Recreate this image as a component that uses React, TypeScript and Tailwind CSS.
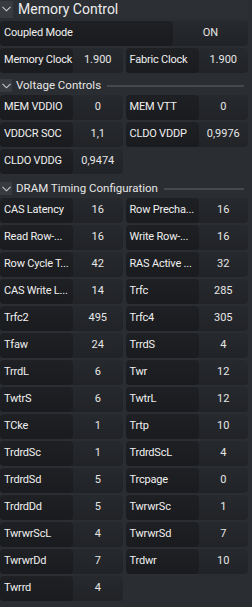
import React from 'react';

type Item = { label: string; value: string };

const voltage: Item[] = [
  { label: 'MEM VDDIO', value: '0' },
  { label: 'MEM VTT', value: '0' },
  { label: 'VDDCR SOC', value: '1,1' },
  { label: 'CLDO VDDP', value: '0,9976' },
  { label: 'CLDO VDDG', value: '0,9474' },
];

const timings: Item[] = [
  { label: 'CAS Latency', value: '16' },
  { label: 'Row Precha...', value: '16' },
  { label: 'Read Row-...', value: '16' },
  { label: 'Write Row-...', value: '16' },
  { label: 'Row Cycle T...', value: '42' },
  { label: 'RAS Active ...', value: '32' },
  { label: 'CAS Write L...', value: '14' },
  { label: 'Trfc', value: '285' },
  { label: 'Trfc2', value: '495' },
  { label: 'Trfc4', value: '305' },
  { label: 'Tfaw', value: '24' },
  { label: 'TrrdS', value: '4' },
  { label: 'TrrdL', value: '6' },
  { label: 'Twr', value: '12' },
  { label: 'TwtrS', value: '6' },
  { label: 'TwtrL', value: '12' },
  { label: 'TCke', value: '1' },
  { label: 'Trtp', value: '10' },
  { label: 'TrdrdSc', value: '1' },
  { label: 'TrdrdScL', value: '4' },
  { label: 'TrdrdSd', value: '5' },
  { label: 'Trcpage', value: '0' },
  { label: 'TrdrdDd', value: '5' },
  { label: 'TwrwrSc', value: '1' },
  { label: 'TwrwrScL', value: '4' },
  { label: 'TwrwrSd', value: '7' },
  { label: 'TwrwrDd', value: '7' },
  { label: 'Trdwr', value: '10' },
  { label: 'Twrrd', value: '4' },
];

function Chevron({ big = false }: { big?: boolean }) {
  return (
    <div className={`flex items-center justify-center bg-[#383b40] ${big ? 'w-[13px] h-[17px]' : 'w-[12px] h-[13px]'}`}>
      <svg width="9" height="6" viewBox="0 0 9 6" fill="none">
        <path d="M0.5 0.8 L4.5 4.8 L8.5 0.8" stroke="#c8cacd" strokeWidth="1.1" />
      </svg>
    </div>
  );
}

function SectionHeader({ title }: { title: string }) {
  return (
    <div className="flex items-center h-[13px]">
      <Chevron />
      <span className="ml-[4px] text-[11.5px] leading-none text-[#e6e6e6]">{title}</span>
      <div className="ml-[6px] mr-[4px] flex-1 h-[2px] bg-[#45484d]" />
    </div>
  );
}

function Cell({ label, value, labelW = 'w-[73px]' }: Item & { labelW?: string }) {
  return (
    <div className="flex h-[25px] rounded-[4px] bg-gradient-to-b from-[#26292d] to-[#212327]">
      <div className={`${labelW} shrink-0 flex items-center pl-[4px] rounded-[4px] bg-gradient-to-b from-[#1e2023] to-[#191b1e] text-[#f0f0f0] tracking-[-0.2px] whitespace-nowrap`}>
        {label}
      </div>
      <div className="flex-1 flex items-center justify-center text-[#e6e6e6]">{value}</div>
    </div>
  );
}

export default function App() {
  return (
    <div className="w-[252px] h-[607px] overflow-hidden bg-[#2a2d31] font-['Roboto',sans-serif] text-[11px]">
      <div className="pr-[4px]">
        {/* Memory Control */}
        <div className="flex items-center h-[18px] bg-[#2c2f34]">
          <Chevron big />
          <span className="ml-[5px] text-[14px] leading-none text-[#ededed]">Memory Control</span>
        </div>
        <div className="mt-[3px] flex flex-col gap-[2px]">
          <Cell label="Coupled Mode" value="ON" labelW="w-[173px]" />
          <div className="grid grid-cols-2 gap-x-[3px]">
            <Cell label="Memory Clock" value="1.900" />
            <Cell label="Fabric Clock" value="1.900" />
          </div>
        </div>

        {/* Voltage Controls */}
        <div className="mt-[6px]">
          <SectionHeader title="Voltage Controls" />
        </div>
        <div className="mt-[3px] grid grid-cols-2 gap-x-[3px] gap-y-[2px]">
          {voltage.map((v) => (
            <Cell key={v.label} {...v} />
          ))}
        </div>

        {/* DRAM Timing */}
        <div className="mt-[8px]">
          <SectionHeader title="DRAM Timing Configuration" />
        </div>
        <div className="mt-[3px] grid grid-cols-2 gap-x-[3px] gap-y-[2px]">
          {timings.map((t) => (
            <Cell key={t.label} {...t} />
          ))}
        </div>
      </div>
    </div>
  );
}
